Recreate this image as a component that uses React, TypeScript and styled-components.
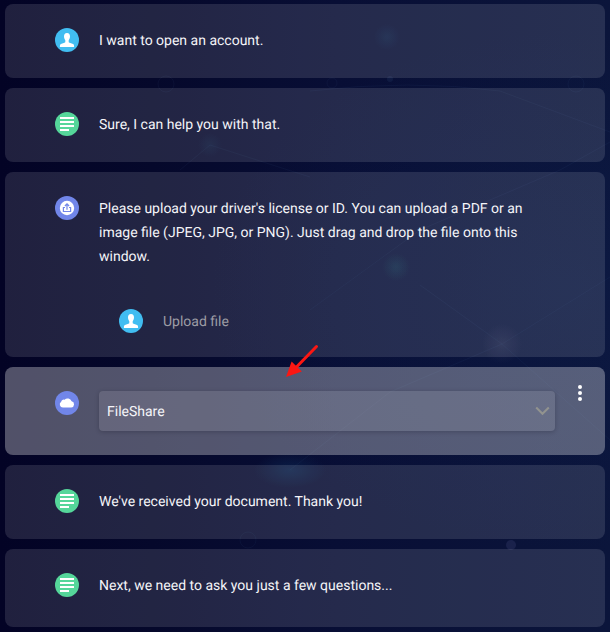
import React from 'react';
import styled, { createGlobalStyle } from 'styled-components';

const GlobalStyle = createGlobalStyle`
  *, *::before, *::after { box-sizing: border-box; }
  body {
    margin: 0;
    background: #050628;
    color: #f4f4f8;
    font: 400 14px/24px Roboto, sans-serif;
    text-rendering: geometricPrecision;
  }
`;

const Page = styled.main`
  position: relative;
  height: 632px;
  overflow: hidden;
  background:
    radial-gradient(circle at 387px 37px, rgba(26, 85, 125, 0.17), transparent 13px),
    radial-gradient(circle at 210px 145px, rgba(26, 85, 125, 0.12), transparent 12px),
    radial-gradient(circle at 396px 267px, rgba(24, 110, 120, 0.2), transparent 14px),
    radial-gradient(circle at 502px 344px, rgba(120, 120, 150, 0.13), transparent 20px),
    radial-gradient(ellipse 36px 18px at 290px 470px, rgba(16, 80, 130, 0.26), transparent),
    radial-gradient(ellipse 360px 260px at 570px 290px, rgba(14, 34, 84, 0.28), transparent),
    linear-gradient(90deg, #030325 0%, #05082b 25%, #080e35 55%, #0b153b 100%);
`;

const Backdrop = styled.svg`
  position: absolute;
  inset: 0;
`;

const Thread = styled.div`
  position: relative;
  display: flex;
  flex-direction: column;
  gap: 10px;
  padding: 4px 5px 5px;
`;

const Card = styled.section<{ $active?: boolean; $height: number }>`
  display: flex;
  align-items: flex-start;
  height: ${(p) => p.$height}px;
  padding: 24px 23px 0 50px;
  border-radius: 8px;
  background: ${(p) => (p.$active ? 'rgba(255, 255, 255, 0.31)' : 'rgba(255, 255, 255, 0.118)')};
`;

const Avatar = styled.svg`
  flex: none;
  width: 24px;
  height: 24px;
  margin-right: 20px;
`;

const Body = styled.div`
  flex: none;
  width: 456px;
`;

const Message = styled.p`
  margin: 0 0 -1px;
  padding-top: 1px;
`;

const Reply = styled.div`
  display: flex;
  align-items: flex-start;
  margin: 41px 0 0 20px;
  color: #9c9ca4;
`;

const Select = styled.div`
  display: flex;
  align-items: center;
  justify-content: space-between;
  height: 40px;
  padding: 0 5px 0 8px;
  border-radius: 4px;
  background: rgba(255, 255, 255, 0.11);
  box-shadow: 0 1px 4px rgba(20, 20, 40, 0.28);
`;

const SelectValue = styled.span`
  padding-top: 2px;
`;

const MenuDots = styled.svg`
  flex: none;
  width: 4px;
  height: 16px;
  margin: -6px 0 0 23px;
`;

const Arrow = styled.svg`
  position: absolute;
  left: 284px;
  top: 343px;
`;

const UserIcon = () => (
  <Avatar viewBox="0 0 24 24">
    <circle cx="12" cy="12" r="12" fill="#41bdf1" />
    <path
      fill="#fff"
      d="M12 5c-2.100 0-3.100 1.500-3 3.600.1 1.600.7 2.900 1.300 3.700v1.900c-.7.8-3.800 1-4.800 2.100-.5.500-.6 1.400-.6 2.600h14.200c0-1.200-.1-2.100-.6-2.600-1-1.100-4.100-1.300-4.800-2.100v-1.900c.6-.8 1.200-2.100 1.300-3.700C15.100 6.500 14.100 5 12 5z"
    />
  </Avatar>
);

const TextIcon = () => (
  <Avatar viewBox="0 0 24 24">
    <circle cx="12" cy="12" r="12" fill="#55d69a" />
    <path fill="#fff" d="M5 5h14v2H5zM5 9h14v2H5zM5 13h14v2H5zM5 17h9v2H5z" />
  </Avatar>
);

const UploadIcon = () => (
  <Avatar viewBox="0 0 24 24">
    <circle cx="12" cy="12" r="12" fill="#7186e9" />
    <circle cx="12" cy="12" r="7.200" fill="#fff" />
    <path d="M10 11.500H8.400v4h7.200v-4H14M12 13.700V8.300M9.900 10L12 7.900 14.100 10" fill="none" stroke="#7186e9" strokeWidth="1.200" />
  </Avatar>
);

const CloudIcon = () => (
  <Avatar viewBox="0 0 24 24">
    <circle cx="12" cy="12" r="12" fill="#7186e9" />
    <path
      fill="#fff"
      d="M7.900 16.500A3.100 3.100 0 0 1 6.200 10.800 2.500 2.500 0 0 1 9.600 8.700 4.300 4.300 0 0 1 16.600 10.300 3.150 3.150 0 0 1 16.300 16.500z"
    />
  </Avatar>
);

const Constellation = () => (
  <Backdrop width="610" height="632" fill="none" stroke="#5a83b8">
    <g opacity="0.06">
      <circle cx="166" cy="84" r="8" />
      <circle cx="332" cy="83" r="5" />
      <circle cx="576" cy="84" r="8" />
      <circle cx="248" cy="540" r="8" />
      <path d="M310 91Q410 79 500 91L610 132M610 142L560 170 420 230 310 310M610 277L502 344 420 285M502 344L610 440M502 344L390 392 290 470M180 170L210 145 310 177" />
    </g>
    <circle cx="511" cy="545" r="5" fill="#5a5e98" stroke="none" opacity="0.2" />
    <circle cx="390" cy="79" r="3" fill="#3d6390" stroke="none" opacity="0.14" />
  </Backdrop>
);

export default function App() {
  return (
    <>
      <GlobalStyle />
      <Page>
        <Constellation />
        <Thread>
          <Card $height={74}>
            <UserIcon />
            <Message>I want to open an account.</Message>
          </Card>
          <Card $height={74}>
            <TextIcon />
            <Message>Sure, I can help you with that.</Message>
          </Card>
          <Card $height={185}>
            <UploadIcon />
            <Body>
              <Message>
                Please upload your driver's license or ID. You can upload a PDF or an image file (JPEG, JPG, or PNG).
                Just drag and drop the file onto this window.
              </Message>
              <Reply>
                <UserIcon />
                <Message>Upload file</Message>
              </Reply>
            </Body>
          </Card>
          <Card $height={88} $active>
            <CloudIcon />
            <Body>
              <Select>
                <SelectValue>FileShare</SelectValue>
                <svg width="15" height="10" viewBox="0 0 15 10" fill="none" stroke="#92938f" strokeWidth="2">
                  <path d="M1.200 1.500l6.300 6.300 6.300-6.300" />
                </svg>
              </Select>
            </Body>
            <MenuDots viewBox="0 0 4 16" fill="#fff">
              <circle cx="2" cy="2" r="2" />
              <circle cx="2" cy="8" r="2" />
              <circle cx="2" cy="14" r="2" />
            </MenuDots>
          </Card>
          <Card $height={74}>
            <TextIcon />
            <Message>We've received your document. Thank you!</Message>
          </Card>
          <Card $height={78}>
            <TextIcon />
            <Message>Next, we need to ask you just a few questions...</Message>
          </Card>
        </Thread>
        <Arrow width="36" height="36" viewBox="0 0 36 36">
          <path d="M32.500 3.500L12 24.500" stroke="#fb1713" strokeWidth="3" strokeLinecap="round" />
          <path d="M2 34L7.600 18.400 17.800 28.600z" fill="#fb1713" />
        </Arrow>
      </Page>
    </>
  );
}
